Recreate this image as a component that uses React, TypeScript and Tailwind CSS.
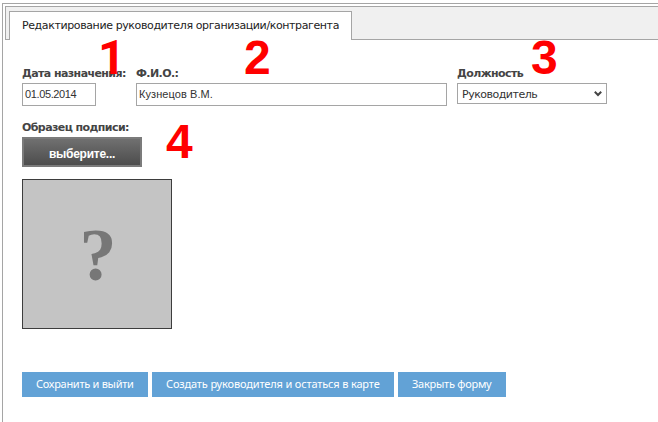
import type { ReactNode } from "react";

const sans = "font-['DejaVu_Sans',Verdana,sans-serif]";
const noto = "font-['Noto_Sans',Tahoma,sans-serif]";
const arial = "font-['Liberation_Sans',Arial,sans-serif]";
const roboto = "font-['Roboto',Arial,sans-serif]";

function Label({ children }: { children: ReactNode }) {
  return (
    <div className={`h-[17px] whitespace-nowrap text-[11px] leading-[17px] font-bold tracking-[-0.58px] text-[#444] ${sans}`}>
      {children}
    </div>
  );
}

function Marker({ className, children }: { className: string; children: ReactNode }) {
  return (
    <span className={`absolute text-[48px] leading-[48px] font-bold text-[#ff0000] ${className}`}>
      {children}
    </span>
  );
}

function Action({ className, children }: { className: string; children: ReactNode }) {
  return (
    <button className={`h-[25px] shrink-0 whitespace-nowrap bg-[#62a2d6] pb-0.5 pl-3.5 text-left text-[11px] leading-[23px] text-white ${noto} ${className}`}>
      {children}
    </button>
  );
}

export default function App() {
  return (
    <div className="relative h-[422px] w-[658px] overflow-hidden bg-white pt-[3px] pl-[2px]">
      <div className="h-[419px] border-t border-l border-[#a5a5a5] pt-[2px] pl-[2px]">
        <header className="flex h-[34px] border-t border-l border-[#a5a5a5] bg-[#f0f0f0]">
          <div className="w-[3px] border-b border-[#a5a5a5]" />
          <div className="mt-1 h-[29px] w-[343px] border-t border-r border-l border-[#a5a5a5] bg-white pl-3">
            <h1 className={`whitespace-nowrap text-[11px] leading-[27px] tracking-[-0.39px] text-[#222] ${sans}`}>
              Редактирование руководителя организации/контрагента
            </h1>
          </div>
          <div className="flex-1 border-b border-[#a5a5a5]" />
        </header>

        <main className="pt-[25px] pl-[17px]">
          <div className="flex">
            <div className="w-[114px]">
              <Label>Дата назначения:</Label>
              <div className={`mt-[1px] h-[23px] w-[74px] border border-[#a5a5a5] pl-[2px] text-[11px] leading-[21px] tracking-[-0.38px] text-[#333] ${arial}`}>
                01.05.2014
              </div>
            </div>
            <div className="w-[321px]">
              <Label>Ф.И.О.:</Label>
              <div className={`mt-[1px] h-[23px] w-[311px] border border-[#a5a5a5] pl-[2px] text-[11px] leading-[21px] tracking-[0.08px] text-[#333] ${arial}`}>
                Кузнецов В.М.
              </div>
            </div>
            <div>
              <Label>Должность</Label>
              <div className={`mt-[1px] flex h-[21px] w-[150px] items-center justify-between border border-[#a5a5a5] pr-1 pl-1 text-[11px] text-[#333] ${sans}`}>
                <span className="pt-0.5 leading-[17px] tracking-[-0.5px]">Руководитель</span>
                <svg width="8" height="6" viewBox="0 0 8 6" fill="none">
                  <path d="M0.8 0.8L4 4L7.2 0.8" stroke="#444" strokeWidth="2" />
                </svg>
              </div>
            </div>
          </div>

          <section className="mt-[13px]">
            <Label>Образец подписи:</Label>
            <button className={`mt-[1px] block h-[30px] w-[120px] border-2 border-[#7b7b7b] bg-linear-to-b from-[#707070] to-[#4d4d4d] pt-1 text-[12px] leading-[22px] font-bold tracking-[-0.25px] text-white ${arial}`}>
              выберите...
            </button>
            <div className="mt-3 flex h-[150px] w-[150px] justify-center border border-[#3d3d3d] bg-[#c4c4c4] pt-[35px] pl-0.5">
              <span className="font-['Liberation_Serif','Times_New_Roman',serif] text-[74px] leading-[80px] font-bold text-[#777]">?</span>
            </div>
          </section>

          <footer className="mt-[43px] flex gap-1">
            <Action className="w-[126px] tracking-[-0.28px]">Сохранить и выйти</Action>
            <Action className="w-[242px] tracking-[-0.15px]">Создать руководителя и остаться в карте</Action>
            <Action className="w-[108px] tracking-[-0.25px]">Закрыть форму</Action>
          </footer>
        </main>
      </div>
      <Marker className={`top-[34px] left-[98px] ${roboto}`}>1</Marker>
      <Marker className={`top-[34px] left-[244px] ${arial}`}>2</Marker>
      <Marker className={`top-[34px] left-[531px] ${arial}`}>3</Marker>
      <Marker className={`top-[118px] left-[166px] ${arial}`}>4</Marker>
    </div>
  );
}
